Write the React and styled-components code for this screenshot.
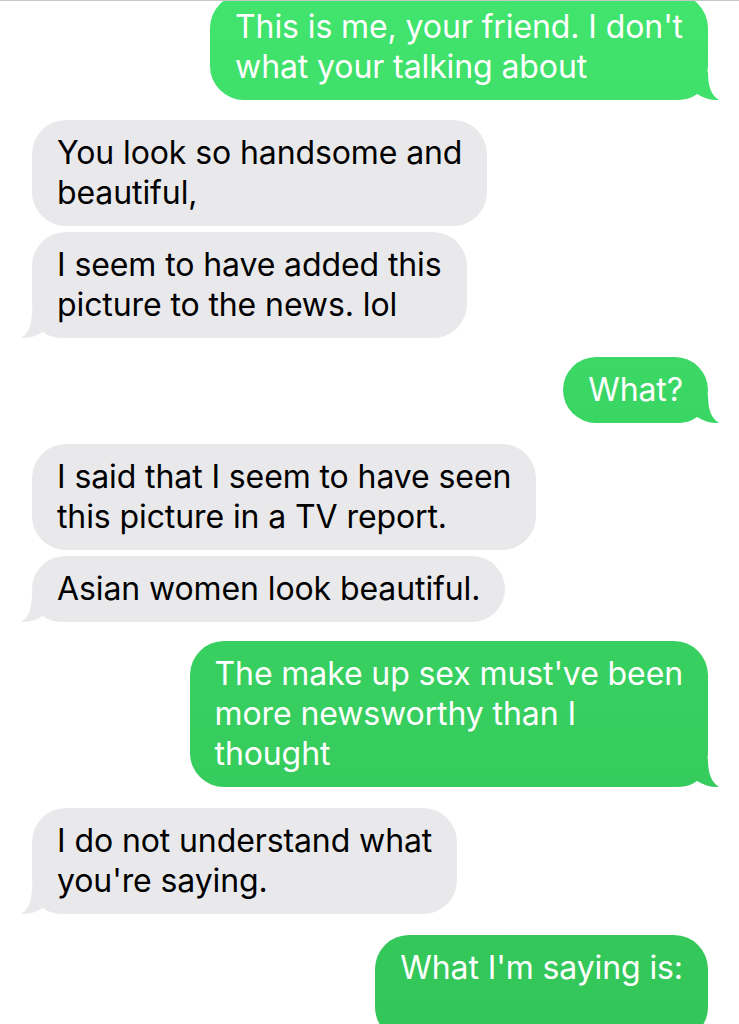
import React from "react";
import styled, { createGlobalStyle, css } from "styled-components";

const GlobalStyle = createGlobalStyle`
  html, body { margin: 0; padding: 0; background: #ffffff; }
  body { font-family: Inter, "Noto Sans", "Liberation Sans", sans-serif; }
`;

const Screen = styled.div`
  position: relative;
  width: 739px;
  height: 1024px;
  overflow: hidden;
  background: #ffffff;
`;

const TopRule = styled.div`
  position: absolute;
  top: 0;
  left: 0;
  right: 0;
  height: 1px;
  background: #c8c8cc;
  z-index: 2;
`;

const Thread = styled.div`
  display: flex;
  flex-direction: column;
  padding: 0 31px 0 32px;
  margin-top: -6px;
`;

const Row = styled.div`
  display: flex;
  justify-content: ${(p) => (p.$sent ? "flex-end" : "flex-start")};
  margin-top: ${(p) => p.$gap}px;
`;

const GREEN = "linear-gradient(180deg, #41e46d 0px, #3ad664 420px, #33c659 1024px)";
const GRAY = "#e9e9eb";

const TAIL_LEFT = "M12 0 C12 14 9 23 1 28 C9 28.5 16 26 23 22 C27 25 33 28 44 28 L44 0 Z";
const TAIL_RIGHT = "M32 0 C32 14 35 23 43 28 C35 28.5 28 26 21 22 C17 25 11 28 0 28 L0 0 Z";

const Bubble = styled.div`
  position: relative;
  z-index: 0;
  padding: 13px 25px;
  border-radius: 34px;
  font-size: 32px;
  line-height: 40px;
  letter-spacing: -0.1px;
  white-space: nowrap;
  ${(p) =>
    p.$sent
      ? css`
          color: #ffffff;
          background: ${GREEN};
          background-attachment: fixed;
        `
      : css`
          color: #000000;
          background: ${GRAY};
        `}

  ${(p) =>
    p.$tail &&
    css`
      &::before {
        content: "";
        position: absolute;
        z-index: -1;
        bottom: 0;
        width: 44px;
        height: 28px;
        ${p.$sent
          ? css`
              right: -12px;
              background: ${GREEN};
              background-attachment: fixed;
              clip-path: path("${TAIL_RIGHT}");
            `
          : css`
              left: -12px;
              background: ${GRAY};
              clip-path: path("${TAIL_LEFT}");
            `}
      }
    `}
`;

const messages = [
  { sent: true, gap: 0, tail: true, lines: ["This is me, your friend. I don't", "what your talking about"] },
  { sent: false, gap: 20, tail: false, lines: ["You look so handsome and", "beautiful,"] },
  { sent: false, gap: 6, tail: true, lines: ["I seem to have added this", "picture to the news. lol"] },
  { sent: true, gap: 19, tail: true, lines: ["What?"] },
  { sent: false, gap: 21, tail: false, lines: ["I said that I seem to have seen", "this picture in a TV report."] },
  { sent: false, gap: 6, tail: true, lines: ["Asian women look beautiful."] },
  { sent: true, gap: 19, tail: true, lines: ["The make up sex must've been", "more newsworthy than I", "thought"] },
  { sent: false, gap: 21, tail: true, lines: ["I do not understand what", "you're saying."] },
  { sent: true, gap: 21, tail: false, lines: ["What I'm saying is:", "\u00a0"] },
];

function Message({ sent, gap, tail, lines }) {
  return (
    <Row $sent={sent} $gap={gap}>
      <Bubble $sent={sent} $tail={tail}>
        {lines.map((l, i) => (
          <React.Fragment key={i}>
            {i > 0 && <br />}
            {l}
          </React.Fragment>
        ))}
      </Bubble>
    </Row>
  );
}

export default function App() {
  return (
    <>
      <GlobalStyle />
      <Screen>
        <TopRule />
        <Thread>
          {messages.map((m, i) => (
            <Message key={i} {...m} />
          ))}
        </Thread>
      </Screen>
    </>
  );
}
